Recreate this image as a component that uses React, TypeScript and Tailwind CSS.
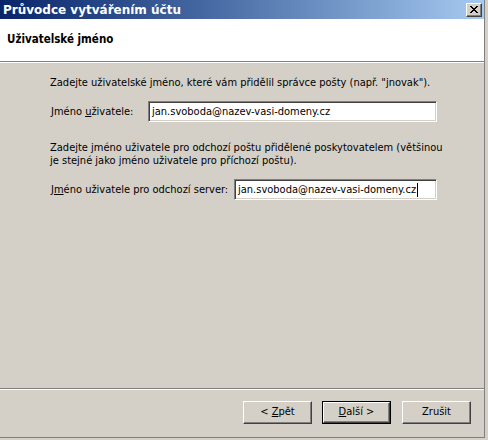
import React from "react";

const font = { fontFamily: '"DejaVu Sans Condensed", "DejaVu Sans", sans-serif' };

const Field: React.FC<{ value: string; width: string; caret?: boolean }> = ({ value, width, caret }) => (
    <div
        className={`${width} h-[21px] bg-white border border-t-[#808080] border-l-[#808080] border-b-white border-r-white shadow-[inset_1px_1px_0_#404040,inset_-1px_-1px_0_#d4d0c8] flex items-center pl-[3px] text-[11px] text-black`}
    >
        <span>{value}</span>
        {caret && <span className="w-px h-[14px] bg-black ml-px"></span>}
    </div>
);

const Button: React.FC<{ children: React.ReactNode; primary?: boolean }> = ({ children, primary }) =>
    primary ? (
        <div className="border border-black">
            <div className="w-[67px] h-[21px] bg-[#d4d0c8] border border-t-white border-l-white border-b-[#404040] border-r-[#404040] shadow-[inset_-1px_-1px_0_#808080] flex items-center justify-center text-[11px] text-black">
                <span>{children}</span>
            </div>
        </div>
    ) : (
        <div className="w-[69px] h-[23px] bg-[#d4d0c8] border border-t-white border-l-white border-b-[#404040] border-r-[#404040] shadow-[inset_-1px_-1px_0_#808080] flex items-center justify-center text-[11px] text-black">
            <span>{children}</span>
        </div>
    );

export default function App() {
    return (
        <div className="w-[488px] h-[440px] bg-[#d4d0c8] flex select-none" style={font}>
            <div className="w-[485px] h-[438px] flex flex-col border-r border-b border-r-[#808080] border-b-[#808080]">
                <div className="h-[19px] bg-gradient-to-r from-[#0a246a] to-[#a6caf0] flex items-center justify-between pl-[3px] pr-[2px]">
                    <span className="text-white font-bold text-[12px]" style={{ fontFamily: '"DejaVu Sans", sans-serif' }}>
                        Průvodce vytvářením účtu
                    </span>
                    <div className="w-[16px] h-[14px] bg-[#d4d0c8] border border-t-white border-l-white border-b-[#404040] border-r-[#404040] shadow-[inset_-1px_-1px_0_#808080] flex items-center justify-center">
                        <svg width="8" height="7" viewBox="0 0 8 7">
                            <path d="M0 0h2v1h1v1h2V1h1V0h2v1H7v1H6v1H5v1h1v1h1v1h1v1H6V6H5V5H3v1H2v1H0V6h1V5h1V4h1V3H2V2H1V1H0z" fill="#000" />
                        </svg>
                    </div>
                </div>
                <div className="h-[43px] bg-white border-b border-b-[#808080] pl-[7px] pt-[7px]">
                    <span className="font-bold text-[11.5px] text-black">Uživatelské jméno</span>
                </div>
                <div className="h-px bg-white"></div>
                <div className="flex-1 flex flex-col pl-[50px] text-[11px] text-black leading-[13px]">
                    <p className="mt-[13px]">Zadejte uživatelské jméno, které vám přidělil správce pošty (např. "jnovak").</p>
                    <div className="flex items-center mt-[12px]">
                        <span className="w-[98px] pl-px">
                            Jméno <u>u</u>živatele:
                        </span>
                        <Field value="jan.svoboda@nazev-vasi-domeny.cz" width="w-[289px]" />
                    </div>
                    <p className="mt-[19px] w-[400px]">
                        Zadejte jméno uživatele pro odchozí poštu přidělené poskytovatelem (většinou je stejné jako jméno uživatele pro příchozí poštu).
                    </p>
                    <div className="flex items-center mt-[12px]">
                        <span className="w-[184px] pl-px">
                            J<u>m</u>éno uživatele pro odchozí server:
                        </span>
                        <Field value="jan.svoboda@nazev-vasi-domeny.cz" width="w-[203px]" caret />
                    </div>
                </div>
                <div className="h-px bg-[#808080]"></div>
                <div className="h-px bg-white"></div>
                <div className="h-[47px] flex justify-end items-start pt-[11px] pr-[13px]">
                    <Button>
                        &lt; <u>Z</u>pět
                    </Button>
                    <div className="w-[10px]"></div>
                    <Button primary>
                        <u>D</u>alší &gt;
                    </Button>
                    <div className="w-[11px]"></div>
                    <Button>Zrušit</Button>
                </div>
            </div>
        </div>
    );
}
